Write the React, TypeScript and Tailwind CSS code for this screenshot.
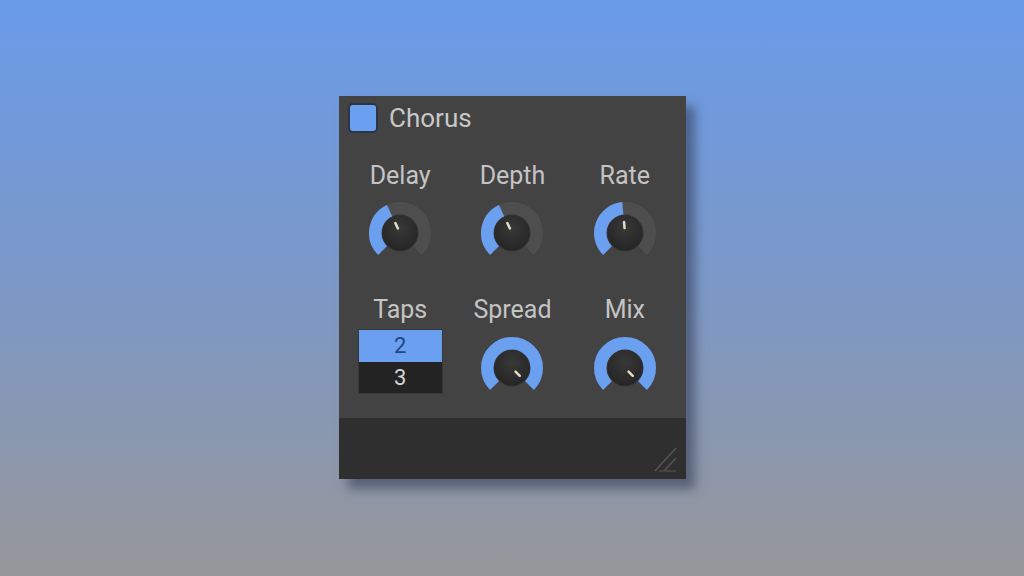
import React from 'react'

const BLUE = '#6b9ff0'

function pt(cx: number, cy: number, r: number, deg: number) {
  const a = (deg * Math.PI) / 180
  return [cx + r * Math.sin(a), cy - r * Math.cos(a)]
}

function arc(r: number, from: number, to: number) {
  const [x1, y1] = pt(32, 32, r, from)
  const [x2, y2] = pt(32, 32, r, to)
  const large = to - from > 180 ? 1 : 0
  return `M ${x1.toFixed(2)} ${y1.toFixed(2)} A ${r} ${r} 0 ${large} 1 ${x2.toFixed(2)} ${y2.toFixed(2)}`
}

function Knob({ angle, id }: { angle: number; id: string }) {
  const [px1, py1] = pt(32, 32, 5, angle)
  const [px2, py2] = pt(32, 32, 11, angle)
  return (
    <svg width="64" height="64" viewBox="0 0 64 64">
      <defs>
        <radialGradient id={id} cx="50%" cy="35%" r="65%">
          <stop offset="0%" stopColor="#383838" />
          <stop offset="100%" stopColor="#252525" />
        </radialGradient>
      </defs>
      {/* track */}
      <path d={arc(24.5, -135, 135)} stroke="#4e4e4e" strokeWidth="13" fill="none" />
      {/* value */}
      <path d={arc(24.5, -135, angle)} stroke={BLUE} strokeWidth="13" fill="none" />
      {/* body */}
      <circle cx="32" cy="32" r="18.5" fill="#333" />
      <circle cx="32" cy="32" r="17.5" fill={`url(#${id})`} />
      <line x1={px1} y1={py1} x2={px2} y2={py2} stroke="#e6dcc4" strokeWidth="2.5" strokeLinecap="round" />
    </svg>
  )
}

function Label({ children }: { children: React.ReactNode }) {
  return <div className="h-[30px] leading-[30px] text-[25px] text-[#c4c4c4]">{children}</div>
}

export default function App() {
  return (
    <div
      className="flex h-[576px] w-[1024px] items-start justify-center bg-[linear-gradient(180deg,#6a9be9_0%,#7c98c6_50%,#979799_100%)] pt-[96px]"
      style={{ fontFamily: 'Roboto, "Noto Sans", sans-serif' }}
    >
      <div className="ml-[1px] flex h-[383px] w-[347px] flex-col bg-[#434343] shadow-[9px_10px_10px_rgba(45,55,80,0.55)]">
        {/* Header */}
        <div className="flex h-[43px] shrink-0 items-center gap-[11px] pl-[9px]">
          <div className="h-[30px] w-[30px] rounded-[5px] border-2 border-[#2c3448] bg-[#6b9ff0]" />
          <span className="text-[26px] leading-none text-[#c8c8c8]">Chorus</span>
        </div>

        {/* Controls */}
        <div className="mt-[22px] grid grid-cols-3 px-[5px]">
          <div className="flex flex-col items-center">
            <Label>Delay</Label>
            <div className="mt-[10px]"><Knob angle={-25} id="k1" /></div>
          </div>
          <div className="flex flex-col items-center">
            <Label>Depth</Label>
            <div className="mt-[10px]"><Knob angle={-25} id="k2" /></div>
          </div>
          <div className="flex flex-col items-center">
            <Label>Rate</Label>
            <div className="mt-[10px]"><Knob angle={-5} id="k3" /></div>
          </div>
        </div>

        <div className="mt-[30px] grid grid-cols-3 px-[5px]">
          <div className="flex flex-col items-center">
            <Label>Taps</Label>
            <div className="mt-[4px] flex w-[85px] flex-col border border-[#383838] text-[22px] leading-none">
              <div className="flex h-[32px] items-center justify-center bg-[#6b9ff0] text-[#24467f]">2</div>
              <div className="flex h-[31px] items-center justify-center bg-[#232323] text-[#d6d6d6]">3</div>
            </div>
          </div>
          <div className="flex flex-col items-center">
            <Label>Spread</Label>
            <div className="mt-[11px]"><Knob angle={135} id="k4" /></div>
          </div>
          <div className="flex flex-col items-center">
            <Label>Mix</Label>
            <div className="mt-[11px]"><Knob angle={135} id="k5" /></div>
          </div>
        </div>

        <div className="flex-1" />

        {/* Footer */}
        <div className="flex h-[61px] shrink-0 items-end justify-end bg-[#2f2f2f] pb-[6px] pr-[7px]">
          <svg width="26" height="26" viewBox="0 0 26 26">
            <line x1="2" y1="24" x2="23" y2="1" stroke="#555" strokeWidth="1.5" />
            <line x1="11" y1="24" x2="23" y2="11" stroke="#555" strokeWidth="1.5" />
            <line x1="6" y1="24" x2="23" y2="24" stroke="#4a4a4a" strokeWidth="1.5" />
          </svg>
        </div>
      </div>
    </div>
  )
}
